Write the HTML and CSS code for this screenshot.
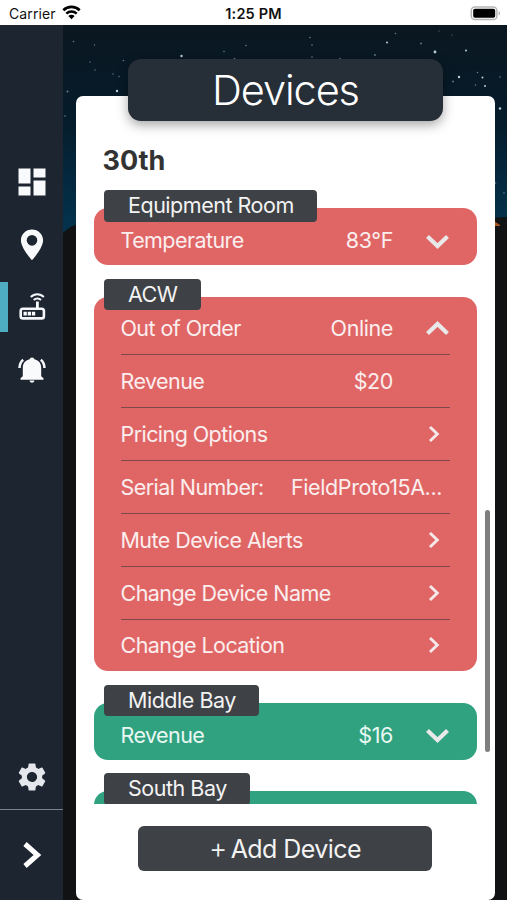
FILE: index.html
```html
<!DOCTYPE html>
<html lang="en">
<head>
    <meta charset="utf-8">
    <title>Devices</title>
    <link rel="stylesheet" href="styles.css">
</head>
<body>
    <header class="status-bar">
        <div class="carrier">
            <span class="carrier-name">Carrier</span>
            <svg class="wifi" width="19" height="15" viewBox="0 0 19 15">
                <path d="M1.3 5.2a12 12 0 0 1 16.4 0" fill="none" stroke="#000" stroke-width="2.7"/>
                <path d="M4.3 8.6a7.6 7.6 0 0 1 10.4 0" fill="none" stroke="#000" stroke-width="2.5"/>
                <path d="M9.5 14.2L6.4 11a4.4 4.4 0 0 1 6.2 0z" fill="#000"/>
            </svg>
        </div>
        <div class="clock">1:25 PM</div>
        <div class="battery-wrap">
            <svg width="32" height="15" viewBox="0 0 32 15">
                <rect x="1.3" y="1" width="25.6" height="12.6" rx="3.6" fill="#fff" stroke="#b5b5b3" stroke-width="1.5"/>
                <rect x="3.2" y="2.8" width="22" height="9" rx="1.8" fill="#000"/>
                <path d="M28.6 5.2c2 .7 2 3.5 0 4.2z" fill="#b5b5b3"/>
            </svg>
        </div>
    </header>

    <div class="screen">
        <nav class="sidebar">
            <a class="nav-item">
                <svg width="36" height="36" viewBox="0 0 24 24"><path d="M3 13h8V3H3v10zm0 8h8v-6H3v6zm10 0h8V11h-8v10zm0-18v6h8V3h-8z"/></svg>
            </a>
            <a class="nav-item">
                <svg width="38" height="38" viewBox="0 0 24 24"><path fill-rule="evenodd" d="M12 2.200C8.100 2.200 5 5.200 5 9c0 5.100 7 12.600 7 12.600s7-7.500 7-12.600c0-3.800-3.100-6.800-7-6.800zm0 10.200a3.350 3.350 0 1 1 0-6.700 3.350 3.350 0 0 1 0 6.700z"/></svg>
            </a>
            <a class="nav-item active">
                <svg width="28" height="28" viewBox="0 0 28 28">
                    <rect x="2.700" y="15.800" width="23.200" height="9.600" rx="2.200" fill="none" stroke="#f4f6fa" stroke-width="2.600"/>
                    <path d="M5.500 18.800h3.300v3.700H5.500zM9.700 18.800H13v3.700H9.700zM13.900 18.800h3.300v3.700h-3.300zM18 8.500h2.800V15H18z"/>
                    <path d="M12.800 4a8.800 8.800 0 0 1 13 0M15.800 7a5 5 0 0 1 7.200 0" fill="none" stroke="#f4f6fa" stroke-width="2"/>
                </svg>
            </a>
            <a class="nav-item">
                <svg width="28" height="28" viewBox="0 0 28 28">
                    <path d="M14 1.500c1.300 0 2.200.7 2.300 1.800 4.600 1.100 6.900 4.200 6.900 8.500v8.400l2.300 2v1.500H2.500v-1.500l2.300-2v-8.400c0-4.300 2.300-7.400 6.900-8.500.1-1.100 1-1.800 2.300-1.800zM11.600 24.600h4.800c0 1.300-1 2.200-2.400 2.200s-2.400-.9-2.400-2.200z"/>
                    <path d="M5.200 3.800C3 5.600 1.700 8.400 1.500 12M22.800 3.800c2.200 1.800 3.500 4.600 3.700 8.200" fill="none" stroke="#f4f6fa" stroke-width="2.500"/>
                </svg>
            </a>
            <a class="nav-item settings">
                <svg width="34" height="34" viewBox="0 0 24 24"><path d="M19.140 12.940c.040-.3.060-.61.060-.94 0-.32-.020-.64-.070-.94l2.030-1.580a.49.49 0 0 0 .12-.61l-1.920-3.320a.488.488 0 0 0-.59-.22l-2.390.96c-.5-.38-1.030-.7-1.620-.94l-.36-2.540a.484.484 0 0 0-.48-.41h-3.840c-.24 0-.43.17-.47.41l-.36 2.540c-.59.24-1.130.57-1.620.94l-2.390-.96c-.22-.080-.47 0-.59.22L2.740 8.870c-.12.21-.080.47.12.61l2.030 1.580c-.050.3-.090.63-.090.94s.020.64.070.94l-2.030 1.580a.49.49 0 0 0-.12.61l1.920 3.320c.12.22.37.29.59.22l2.390-.96c.5.38 1.030.7 1.620.94l.36 2.540c.050.24.24.41.48.41h3.840c.24 0 .44-.17.47-.41l.36-2.540c.59-.24 1.130-.56 1.620-.94l2.390.96c.22.080.47 0 .59-.22l1.920-3.320c.12-.22.070-.47-.12-.61l-2.010-1.580zM12 15.600A3.610 3.610 0 0 1 8.400 12c0-1.980 1.620-3.600 3.600-3.600s3.600 1.620 3.600 3.600-1.620 3.600-3.600 3.600z"/></svg>
            </a>
            <a class="nav-item expand">
                <svg width="20" height="28" viewBox="0 0 20 28"><path d="M3 3l12.500 11L3 25" fill="none" stroke="#fff" stroke-width="5"/></svg>
            </a>
        </nav>

        <main class="content">
            <!-- night sky and hills -->
            <svg class="sky" width="444" height="875" viewBox="63 25 444 875">
                <defs>
                    <linearGradient id="night" x1="0" y1="0" x2="0" y2="1">
                        <stop offset="0" stop-color="#0b1720"/>
                        <stop offset="0.45" stop-color="#051c2b"/>
                        <stop offset="1" stop-color="#033450"/>
                    </linearGradient>
                </defs>
                <rect x="63" y="25" width="444" height="210" fill="url(#night)"/>
                <path d="M63 233q6-6 12-8l414-7 18-1v683H63z" fill="#111213"/>
                <path d="M494 221l3 2 3 2v1h-6z" fill="#a5541e"/>
                <g fill="#b9d0da">
                    <circle cx="435" cy="52" r="1.400"/>
                    <circle cx="181.500" cy="56" r="1.200"/>
                    <circle cx="117" cy="91" r="1.200"/>
                    <circle cx="459" cy="77" r="1.200"/>
                    <circle cx="482.500" cy="77.500" r="1"/>
                    <circle cx="485" cy="86" r="1"/>
                    <circle cx="500" cy="108.500" r="1.200"/>
                    <circle cx="387" cy="42.500" r="1"/>
                    <circle cx="466" cy="50.500" r="1"/>
                </g>
                <g fill="#63808d">
                    <circle cx="67.500" cy="91.500" r="1"/>
                    <circle cx="73.500" cy="41.500" r=".8"/>
                    <circle cx="94.500" cy="45" r=".7"/>
                    <circle cx="90" cy="62" r=".7"/>
                    <circle cx="95" cy="70" r=".7"/>
                    <circle cx="123.500" cy="60.500" r=".8"/>
                    <circle cx="113" cy="74" r=".7"/>
                    <circle cx="119" cy="76.500" r=".7"/>
                    <circle cx="224" cy="51.500" r=".8"/>
                    <circle cx="234.500" cy="58.500" r=".8"/>
                    <circle cx="246" cy="45.500" r=".8"/>
                    <circle cx="310" cy="37.500" r=".8"/>
                    <circle cx="312" cy="45" r=".8"/>
                    <circle cx="312" cy="57" r=".8"/>
                    <circle cx="340" cy="58.500" r=".8"/>
                    <circle cx="375" cy="55" r=".9"/>
                    <circle cx="395.500" cy="33.500" r=".8"/>
                    <circle cx="421" cy="43.500" r=".9"/>
                    <circle cx="439" cy="31" r=".6"/>
                    <circle cx="452" cy="35" r=".6"/>
                    <circle cx="453" cy="81.500" r=".9"/>
                    <circle cx="475.500" cy="85" r=".8"/>
                    <circle cx="477.500" cy="72.500" r=".8"/>
                    <circle cx="500" cy="77" r=".8"/>
                    <circle cx="65" cy="116" r=".8"/>
                    <circle cx="504" cy="193" r=".8"/>
                    <circle cx="495.500" cy="183" r=".8"/>
                </g>
            </svg>

            <h1 class="title"><span>Devices</span></h1>

            <section class="panel">
                <h2 class="location">30th</h2>

                <div class="device-list">
                    <div class="device">
                        <div class="device-name">Equipment Room</div>
                        <div class="device-card alert">
                            <div class="row"><span>Temperature</span><span class="value">83°F</span>
                                <svg class="toggle" width="25" height="16" viewBox="0 0 25 16"><path d="M2.500 3.500l10 9.500 10-9.500"/></svg></div>
                        </div>
                    </div>

                    <div class="device">
                        <div class="device-name">ACW</div>
                        <div class="device-card alert">
                            <div class="row"><span>Out of Order</span><span class="value">Online</span>
                                <svg class="toggle" width="25" height="16" viewBox="0 0 25 16"><path d="M2.500 13.500l10-9.500 10 9.500"/></svg></div>
                            <div class="row"><span>Revenue</span><span class="value">$20</span><span class="toggle-space"></span></div>
                            <div class="row"><span>Pricing Options</span>
                                <svg class="more" width="12" height="18" viewBox="0 0 12 18"><path d="M2 2l7.300 7L2 16"/></svg></div>
                            <div class="row"><span>Serial Number:</span><span class="value serial">FieldProto15A...</span></div>
                            <div class="row"><span>Mute Device Alerts</span>
                                <svg class="more" width="12" height="18" viewBox="0 0 12 18"><path d="M2 2l7.300 7L2 16"/></svg></div>
                            <div class="row"><span>Change Device Name</span>
                                <svg class="more" width="12" height="18" viewBox="0 0 12 18"><path d="M2 2l7.300 7L2 16"/></svg></div>
                            <div class="row"><span>Change Location</span>
                                <svg class="more" width="12" height="18" viewBox="0 0 12 18"><path d="M2 2l7.300 7L2 16"/></svg></div>
                        </div>
                    </div>

                    <div class="device">
                        <div class="device-name">Middle Bay</div>
                        <div class="device-card ok">
                            <div class="row"><span>Revenue</span><span class="value">$16</span>
                                <svg class="toggle" width="25" height="16" viewBox="0 0 25 16"><path d="M2.500 3.500l10 9.500 10-9.500"/></svg></div>
                        </div>
                    </div>

                    <div class="device">
                        <div class="device-name">South Bay</div>
                        <div class="device-card ok"></div>
                    </div>
                    <div class="scrollbar"></div>
                </div>

                <button class="add-device" type="button"><span class="plus">+</span><span>Add Device</span></button>
            </section>
        </main>
    </div>
</body>
</html>
```
FILE: styles.css
```css
* {
    box-sizing: border-box;
}

body {
    margin: 0;
    height: 900px;
    overflow: hidden;
    font-family: Inter, "Liberation Sans", sans-serif;
    background-color: #fff;
}

svg {
    display: block;
    flex: none;
}

.status-bar {
    display: grid;
    grid-template-columns: 1fr auto 1fr;
    align-items: center;
    height: 25px;
    padding: 2px 5px 0 9px;
    font-size: 14px;
    color: #111;
}

.carrier {
    display: flex;
    align-items: center;
    gap: 6px;
}

.carrier-name {
    letter-spacing: 0.1px;
}

.wifi {
    margin-top: -2px;
}

.clock {
    margin-left: -4px;
    font-size: 14.5px;
    font-weight: 600;
    letter-spacing: 0.15px;
}

.battery-wrap {
    display: flex;
    justify-content: flex-end;
    margin-top: -1px;
}

.screen {
    display: flex;
    height: 875px;
}

.sidebar {
    display: flex;
    flex-direction: column;
    width: 63px;
    padding-top: 126px;
    background-color: #1c2530;
    fill: #f8fafc;
}

.nav-item {
    display: flex;
    align-items: center;
    justify-content: center;
    height: 50px;
    margin-top: 6px;
    margin-bottom: 6.6px;
}

.nav-item.active {
    border-left: 8px solid #4fadc3;
    padding-right: 8px;
}

.nav-item.settings {
    height: 65px;
    margin: auto 0 0;
    border-bottom: 1px solid #7c838b;
    fill: #e4e8ec;
}

.nav-item.expand {
    height: 90px;
    margin: 0;
}

.content {
    position: relative;
    display: flex;
    flex-direction: column;
    width: 444px;
    padding: 34px 12.5px 0 12px;
}

.sky {
    position: absolute;
    top: 0;
    left: 0;
}

.title {
    z-index: 2;
    display: flex;
    align-items: center;
    justify-content: center;
    flex: none;
    width: 315px;
    height: 62px;
    margin: 0 0 -25.5px 53px;
    border-radius: 13px;
    background-color: #262e38;
    box-shadow: 0 4px 12px rgba(0, 0, 0, 0.35);
    color: #fff;
    font-size: 41.5px;
    font-weight: 350;
    letter-spacing: -1.1px;
}

.panel {
    z-index: 1;
    display: flex;
    flex-direction: column;
    flex: 1;
    margin-left: 0.5px;
    border-radius: 7px;
    background-color: #fff;
}

.location {
    margin: 47.5px 0 0 27px;
    height: 47px;
    color: #333;
    font-size: 27px;
    font-weight: 700;
    line-height: 36px;
}

.device-list {
    position: relative;
    height: 614px;
    padding: 0 17.5px 0 18.5px;
    overflow: hidden;
}

.device {
    display: flex;
    flex-direction: column;
    align-items: flex-start;
    margin-bottom: 13.3px;
}

.device-name {
    z-index: 1;
    height: 31.5px;
    margin: 0 0 -13.3px 10px;
    padding: 0 23.5px 0 24px;
    border-radius: 4px;
    background-color: #3e4146;
    color: #f3f3f3;
    font-size: 21.5px;
    line-height: 31px;
    letter-spacing: -0.48px;
}

.device-card {
    width: 100%;
    min-height: 57px;
    padding: 4px 27px 0.6px 26.5px;
    border-radius: 14px;
    color: #fbeeee;
    font-size: 21.5px;
    letter-spacing: -0.57px;
}

.alert {
    background-color: #e06666;
}

.ok {
    background-color: #30a280;
    color: #e9f8f3;
}

.row {
    display: flex;
    align-items: center;
    height: 53px;
    white-space: nowrap;
}

.row:first-child {
    padding-top: 1px;
}

.row:last-child {
    height: 52px;
}

.row:only-child {
    padding-top: 4px;
}

.row + .row {
    border-top: 1.5px solid #7d494d;
}

.value {
    margin-left: auto;
    letter-spacing: -0.4px;
}

.serial {
    margin-right: 8px;
}

.toggle {
    margin-top: 1px;
    margin-left: 32px;
    fill: none;
    stroke: #e9e9e9;
    stroke-width: 4.2;
}

.toggle-space {
    width: 57px;
}

.more {
    margin-left: auto;
    margin-right: 10px;
    fill: none;
    stroke: #f6e9e9;
    stroke-width: 2.9;
}

.scrollbar {
    position: absolute;
    top: 320px;
    right: 4.5px;
    width: 5px;
    height: 242px;
    border-radius: 3px;
    background-color: #7f7f7f;
}

.add-device {
    display: flex;
    align-items: center;
    justify-content: center;
    gap: 4px;
    width: 294px;
    height: 45px;
    margin: 22px 0 0 62.5px;
    padding: 1px 0 0;
    border: 0;
    border-radius: 6px;
    background-color: #3e4146;
    color: #f3f3f3;
    font-family: inherit;
    font-size: 25px;
    letter-spacing: -0.55px;
}

.plus {
    font-size: 28px;
    font-weight: 300;
    line-height: 28px;
    margin-top: -3px;
}
```
